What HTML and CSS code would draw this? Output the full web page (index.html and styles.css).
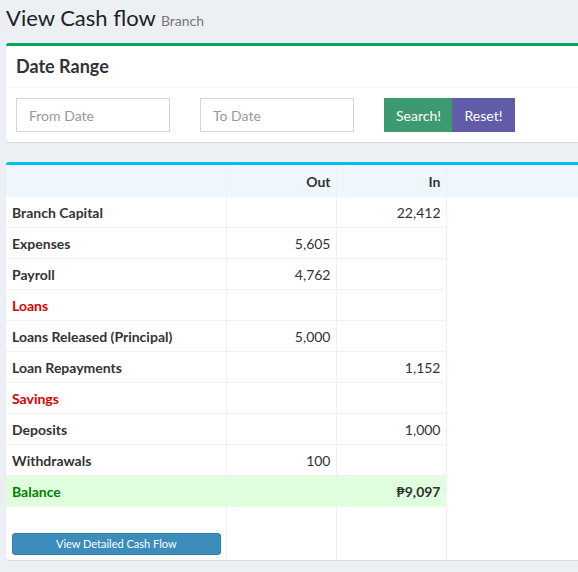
FILE: index.html
```html
<!DOCTYPE html>
<html lang="en">
<head>
    <meta charset="UTF-8">
    <meta name="viewport" content="width=device-width, initial-scale=1.0">
    <title>View Cash flow</title>
    <link rel="stylesheet" href="styles.css">
</head>
<body>
    <section class="content-header">
        <h1>View Cash flow <small>Branch</small></h1>
    </section>
    <section class="content">
        <div class="box box-success">
            <div class="box-header">
                <h3 class="box-title">Date Range</h3>
            </div>
            <div class="box-body filter-row">
                <input type="text" class="form-control" placeholder="From Date">
                <input type="text" class="form-control" placeholder="To Date">
                <div class="btn-group">
                    <button class="btn btn-search">Search!</button>
                    <button class="btn btn-reset">Reset!</button>
                </div>
            </div>
        </div>
        <div class="box box-info">
            <table class="cash-table">
                <colgroup>
                    <col class="col-name">
                    <col class="col-num">
                    <col class="col-num">
                    <col>
                </colgroup>
                <thead>
                    <tr>
                        <th></th>
                        <th class="num">Out</th>
                        <th class="num">In</th>
                        <th class="rest"></th>
                    </tr>
                </thead>
                <tbody>
                    <tr><td class="label">Branch Capital</td><td class="num"></td><td class="num">22,412</td><td class="rest"></td></tr>
                    <tr><td class="label">Expenses</td><td class="num">5,605</td><td class="num"></td><td class="rest"></td></tr>
                    <tr><td class="label">Payroll</td><td class="num">4,762</td><td class="num"></td><td class="rest"></td></tr>
                    <tr><td class="label red">Loans</td><td class="num"></td><td class="num"></td><td class="rest"></td></tr>
                    <tr><td class="label">Loans Released (Principal)</td><td class="num">5,000</td><td class="num"></td><td class="rest"></td></tr>
                    <tr><td class="label">Loan Repayments</td><td class="num"></td><td class="num">1,152</td><td class="rest"></td></tr>
                    <tr><td class="label red">Savings</td><td class="num"></td><td class="num"></td><td class="rest"></td></tr>
                    <tr><td class="label">Deposits</td><td class="num"></td><td class="num">1,000</td><td class="rest"></td></tr>
                    <tr><td class="label">Withdrawals</td><td class="num">100</td><td class="num"></td><td class="rest"></td></tr>
                    <tr class="balance"><td class="label">Balance</td><td class="num"></td><td class="num total">&#8369;9,097</td><td class="rest"></td></tr>
                    <tr class="last-row">
                        <td class="btn-cell"><a href="#" class="btn-detail">View Detailed Cash Flow</a></td>
                        <td class="num"></td><td class="num"></td><td class="rest"></td>
                    </tr>
                </tbody>
            </table>
        </div>
    </section>
</body>
</html>
```
FILE: styles.css
```css
body {
    margin: 0;
    background: #ecf0f5;
    font-family: Lato, "Open Sans", sans-serif;
    font-size: 14px;
    color: #333;
    overflow: hidden;
}
.content-header {
    padding: 3px 6px 0 6px;
}
.content-header h1 {
    margin: 0;
    font-size: 22px;
    font-weight: 400;
    line-height: 30px;
    color: #222;
}
.content-header small {
    font-size: 14px;
    color: #777;
}
.content {
    padding: 7px 0 0 6px;
}
.box {
    background: #fff;
    border-top: 3px solid #d2d6de;
    border-radius: 3px 0 0 3px;
    box-shadow: 0 1px 1px rgba(0, 0, 0, 0.1);
    margin-bottom: 20px;
}
.box-success {
    border-top-color: #00a65a;
}
.box-info {
    border-top-color: #00c0ef;
}
.box-header {
    padding: 10px;
    height: 21px;
    border-bottom: 1px solid #f4f4f4;
}
.box-title {
    margin: 0;
    font-size: 18px;
    font-weight: 700;
    line-height: 21px;
}
.box-body {
    padding: 10px;
}
.filter-row {
    display: flex;
    gap: 30px;
    align-items: center;
}
.form-control {
    width: 154px;
    height: 34px;
    box-sizing: border-box;
    border: 1px solid #d2d6de;
    padding: 6px 12px;
    font-family: inherit;
    font-size: 14px;
    margin: 0;
}
.form-control::placeholder {
    color: #999;
}
.btn-group {
    display: flex;
}
.btn {
    height: 34px;
    border: none;
    color: #fff;
    font-family: inherit;
    font-size: 14px;
    padding: 0 12px;
    cursor: pointer;
}
.btn-search {
    background: #3d9970;
    width: 68px;
}
.btn-reset {
    background: #605ca8;
    width: 63px;
}
.cash-table {
    width: 100%;
    border-collapse: collapse;
    table-layout: fixed;
}
.col-name {
    width: 220px;
}
.col-num {
    width: 110px;
}
.cash-table th {
    height: 32px;
    padding: 0 5px;
    background: #eff7fe;
    font-weight: 700;
    border-right: 1px solid #f0f0f0;
}
.cash-table td {
    height: 30px;
    padding: 0 5px 0 6px;
    border-bottom: 1px solid #f0f0f0;
    border-right: 1px solid #f0f0f0;
}
.cash-table th.rest,
.cash-table td.rest {
    border: none;
}
.label {
    font-weight: 700;
}
.red {
    color: #dd0000;
}
.num {
    text-align: right;
}
.balance td {
    background: #dfffdf;
    border-bottom-color: #dfffdf;
}
.balance td.rest {
    background: #fff;
}
.balance .label {
    color: #008000;
}
.total {
    font-weight: 700;
}
.last-row td {
    height: 48px;
    border-bottom: none;
    vertical-align: bottom;
    padding-bottom: 5px;
}
.btn-detail {
    display: block;
    height: 22px;
    line-height: 20px;
    background: #3c8dbc;
    border: 1px solid #367fa9;
    border-radius: 3px;
    color: #fff;
    text-align: center;
    text-decoration: none;
    font-size: 11px;
    box-sizing: border-box;
}
```
